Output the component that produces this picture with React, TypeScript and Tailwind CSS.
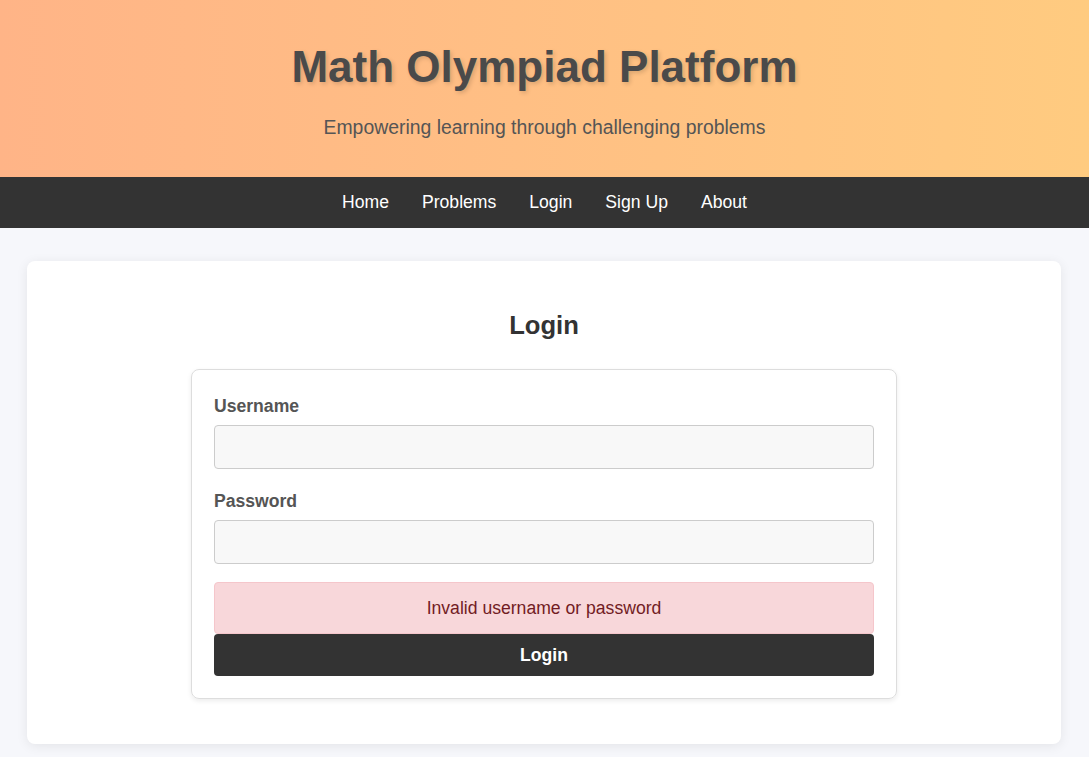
export default function App() {
  const links = ["Home", "Problems", "Login", "Sign Up", "About"];

  return (
    <div className="min-h-screen bg-[#f6f7fb] font-['Liberation_Sans',Arial,sans-serif]">
      {/* header */}
      <header className="bg-gradient-to-r from-[#ffb487] to-[#ffcb80] pt-[41px] pb-[37px] text-center">
        <h1 className="text-[44px] leading-[52px] font-bold text-[#4a4a4a] [text-shadow:2px_2px_4px_rgba(0,0,0,0.15)]">
          Math Olympiad Platform
        </h1>
        <p className="mt-[22px] text-[19.4px] leading-[25px] text-[#555]">
          Empowering learning through challenging problems
        </p>
      </header>

      {/* nav */}
      <nav className="bg-[#333] pt-[15px] pb-[16px] flex justify-center gap-[33px]">
        {links.map((l) => (
          <a key={l} href="#" className="text-white text-[17.6px] leading-[20px]">
            {l}
          </a>
        ))}
      </nav>

      <main className="pl-[27px] pr-[28px] pt-[33px] pb-[20px]">
        <div className="bg-white rounded-lg shadow-[0_2px_12px_rgba(0,0,0,0.08)] pt-[49px] pb-[45px]">
          <h2 className="text-center text-[25.6px] leading-[31px] font-bold text-[#333] mb-[28px]">
            Login
          </h2>

          <form className="mx-auto w-[706px] border border-[#ddd] rounded-lg shadow-[0_2px_5px_rgba(0,0,0,0.08)] px-[22px] pt-[26px] pb-[22px]">
            <div className="mb-[22px]">
              <label
                htmlFor="username"
                className="block text-[17.6px] leading-[20px] font-bold text-[#555] mb-[9px]"
              >
                Username
              </label>
              <input
                id="username"
                type="text"
                className="block w-full h-[44px] bg-[#f8f8f8] border border-[#ccc] rounded-[4px] px-3 outline-none"
              />
            </div>
            <div className="mb-[18px]">
              <label
                htmlFor="password"
                className="block text-[17.6px] leading-[20px] font-bold text-[#555] mb-[9px]"
              >
                Password
              </label>
              <input
                id="password"
                type="password"
                className="block w-full h-[44px] bg-[#f8f8f8] border border-[#ccc] rounded-[4px] px-3 outline-none"
              />
            </div>

            <div className="h-[52px] flex items-center justify-center bg-[#f8d7da] border border-[#f5c6cb] rounded-[4px] text-[#721c24] text-[17.6px] leading-[20px]">
              Invalid username or password
            </div>
            <button
              type="submit"
              className="block w-full h-[42px] bg-[#333] text-white font-bold text-[17.6px] leading-[20px] rounded-[4px]"
            >
              Login
            </button>
          </form>
        </div>
      </main>
    </div>
  );
}
